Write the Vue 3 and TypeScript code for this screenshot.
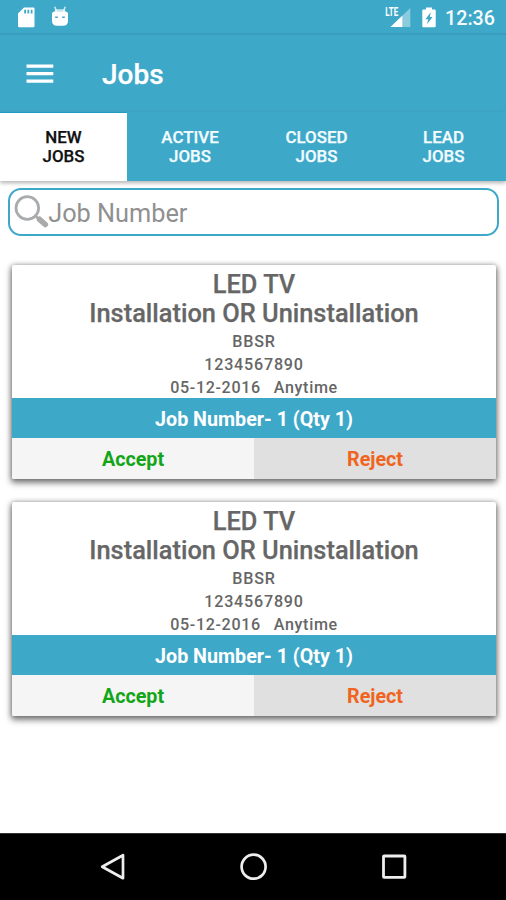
<script setup lang="ts">
interface Tab {
  top: string
  bottom: string
}

interface Job {
  id: number
  product: string
  service: string
  city: string
  phone: string
  date: string
  slot: string
  label: string
}

const tabs: Tab[] = [
  { top: 'NEW', bottom: 'JOBS' },
  { top: 'ACTIVE', bottom: 'JOBS' },
  { top: 'CLOSED', bottom: 'JOBS' },
  { top: 'LEAD', bottom: 'JOBS' },
]
const activeTab = 0

const base = {
  product: 'LED TV',
  service: 'Installation OR Uninstallation',
  city: 'BBSR',
  phone: '1234567890',
  date: '05-12-2016',
  slot: 'Anytime',
  label: 'Job Number- 1 (Qty 1)',
}
const jobs: Job[] = [
  { id: 1, ...base },
  { id: 2, ...base },
]
</script>

<template>
  <div class="screen">
    <header class="status">
      <svg class="sd" viewBox="0 0 17 21">
        <path fill="#fff" fill-rule="evenodd" d="M6 0.5H15.5Q16.5 0.5 16.5 1.5V19Q16.5 20.2 15.3 20.2H1.2Q0 20.2 0 19V6.5ZM6.2 2.8V6.5H8V2.8ZM9.4 2.8V6.5H11.2V2.8ZM12.7 2.8V6.5H14.5V2.8Z" />
      </svg>
      <svg class="droid" viewBox="0 0 18 21">
        <path d="M4 1.2L5.3 5M14 1.2L12.7 5" stroke="#fff" stroke-width="1.5" stroke-linecap="round" opacity="0.75" />
        <path fill="#fff" opacity="0.7" d="M4.8 3.2H13.2L15.5 6.5H2.5Z" />
        <path fill="#fff" d="M3 5.8H15Q17 5.8 17 7.8V14.5Q17 19.8 12 19.8H6Q1 19.8 1 14.5V7.8Q1 5.8 3 5.8Z" />
        <path d="M4.2 11.3H6.8M11.2 11.3H13.8" stroke="#3ea8c9" stroke-width="1.5" />
      </svg>
      <span class="gap"></span>
      <svg class="signal" viewBox="0 0 26 22">
        <path d="M25.3 1V20H5.5Z" fill="#fff" opacity="0.4" />
        <path d="M17.3 8.7V20H5.5Z" fill="#fff" />
        <path d="M0 0H14V9.8L11 11H0Z" fill="#3ea8c9" />
        <text class="lte" x="0.3" y="9.3" textLength="12.8" lengthAdjust="spacingAndGlyphs">LTE</text>
      </svg>
      <svg class="battery" viewBox="0 0 14 21">
        <path fill="#fff" fill-rule="evenodd" d="M4 0.5H10V2.5H12.7Q13.7 2.5 13.7 3.5V19.3Q13.7 20.3 12.7 20.3H1.3Q0.3 20.3 0.3 19.3V3.5Q0.3 2.5 1.3 2.5H4ZM8.8 5.3L3.4 12.3H6.2L5 17.2L10.6 10H7.8Z" />
      </svg>
      <span class="clock">12:36</span>
    </header>

    <div class="appbar">
      <svg class="menu" viewBox="0 0 28 20">
        <path d="M0.5 2.2H27.3M0.5 9.7H27.3M0.5 17.2H27.3" stroke="#fff" stroke-width="3.2" />
      </svg>
      <h1>Jobs</h1>
    </div>

    <nav class="tabs">
      <div v-for="(tab, i) in tabs" :key="tab.top" class="tab" :class="{ active: i === activeTab }">
        <span>{{ tab.top }}</span>
        <span>{{ tab.bottom }}</span>
      </div>
    </nav>

    <div class="search">
      <svg viewBox="0 0 36 36">
        <path d="M25.5 25.3L31.3 30.5" stroke="#aaa" stroke-width="5.6" stroke-linecap="round" />
        <circle cx="13.3" cy="14" r="11.3" fill="none" stroke="#a9acae" stroke-width="2.8" />
        <path d="M21.3 21.8L24 24.2" stroke="#aaa" stroke-width="2.5" />
      </svg>
      <span>Job Number</span>
    </div>

    <main class="list">
      <article v-for="job in jobs" :key="job.id" class="card">
        <div class="info">
          <h2>{{ job.product }}</h2>
          <h2>{{ job.service }}</h2>
          <p>{{ job.city }}</p>
          <p>{{ job.phone }}</p>
          <p class="when"><span>{{ job.date }}</span><span>{{ job.slot }}</span></p>
        </div>
        <div class="band">{{ job.label }}</div>
        <div class="actions">
          <div class="accept">Accept</div>
          <div class="reject">Reject</div>
        </div>
      </article>
    </main>

    <footer class="navbar">
      <svg viewBox="0 0 28 28"><path d="M24 2.2V25.2L3.2 13.7Z" fill="none" stroke="#eee" stroke-width="2.7" stroke-linejoin="round" /></svg>
      <svg viewBox="0 0 28 28"><circle cx="13.6" cy="13.7" r="12" fill="none" stroke="#eee" stroke-width="2.7" /></svg>
      <svg viewBox="0 0 28 28"><rect x="3.5" y="3" width="21.4" height="21.4" rx="0.6" fill="none" stroke="#eee" stroke-width="2.8" /></svg>
    </footer>
  </div>
</template>

<style>
body {
  margin: 0;
  background: #fff;
}
</style>

<style scoped>
.screen {
  width: 506px;
  height: 900px;
  display: flex;
  flex-direction: column;
  overflow: hidden;
  background: #fff;
  font-family: Roboto, "Liberation Sans", sans-serif;
}
.status {
  box-sizing: border-box;
  height: 33px;
  flex: none;
  display: flex;
  align-items: flex-start;
  padding: 7px 11px 0 17.5px;
  background: #3ea8c9;
}
.sd { width: 17px; height: 21px; }
.droid { width: 18px; height: 21px; margin: -1px 0 0 16px; }
.gap { flex: 1; }
.signal { width: 26px; height: 22px; margin-right: 11px; overflow: visible; }
.lte { font-size: 12.5px; font-weight: 700; fill: #fff; }
.battery { width: 14px; height: 21px; margin-right: 9.5px; }
.clock {
  font-size: 19.7px;
  line-height: 23px;
  font-weight: 500;
  color: #f4fbfd;
}
.appbar {
  box-sizing: border-box;
  height: 79px;
  flex: none;
  display: flex;
  align-items: center;
  padding: 2px 26px 0 26px;
  background: linear-gradient(#3797b8 0, #3ea8c9 3px);
}
.menu { width: 28px; height: 20px; }
h1 {
  margin: 3px 0 0 48px;
  font-size: 28px;
  line-height: 34px;
  font-weight: 500;
  color: #fff;
  -webkit-text-stroke: 0.25px currentColor;
}
.tabs {
  height: 68.5px;
  flex: none;
  display: grid;
  grid-template-columns: 127px 126px 127px 126px;
  background: #3ea8c9;
  box-shadow: 0 2px 4px rgba(0, 0, 0, 0.3);
}
.tab {
  box-sizing: border-box;
  display: flex;
  flex-direction: column;
  align-items: center;
  justify-content: center;
  border-top: 1px solid transparent;
  padding-top: 1px;
  font-size: 16.9px;
  line-height: 19px;
  font-weight: 500;
  color: #f2fcff;
  -webkit-text-stroke: 0.25px currentColor;
}
.tab.active {
  background: #fff;
  border-top-color: #1c9cc0;
  color: #111;
}
.tab:last-child { padding-left: 1px; }
.search {
  box-sizing: border-box;
  height: 48px;
  flex: none;
  display: flex;
  align-items: center;
  margin: 7.5px 7px 0 8px;
  padding-left: 4px;
  border: 2px solid #3ea8c9;
  border-radius: 13px;
  font-size: 25.3px;
  line-height: 30px;
  color: #909090;
}
.search svg { width: 36px; height: 36px; }
.search span { margin: 3px 0 0 -1.8px; }
.list {
  flex: 1;
  display: flex;
  flex-direction: column;
  gap: 23px;
  padding: 29px 10px 0 12px;
}
.card {
  height: 214px;
  flex: none;
  display: flex;
  flex-direction: column;
  border-radius: 2px;
  overflow: hidden;
  background: #fff;
  box-shadow: 0 3px 6px 1px rgba(0, 0, 0, 0.5), 0 0 5px rgba(0, 0, 0, 0.25);
}
.info {
  box-sizing: border-box;
  height: 133px;
  flex: none;
  padding-top: 4.5px;
  text-align: center;
  color: #666;
}
h2 {
  margin: 0;
  font-size: 25.4px;
  line-height: 29.6px;
  font-weight: 500;
  -webkit-text-stroke: 0.25px currentColor;
}
h2 + p { margin-top: 1px; }
p {
  margin: 0;
  font-size: 16.1px;
  line-height: 23px;
  font-weight: 500;
  letter-spacing: 0.8px;
}
.when { letter-spacing: 0.65px; }
.when span + span { margin-left: 13px; }
.band {
  height: 40.3px;
  flex: none;
  text-align: center;
  line-height: 43px;
  font-size: 19.7px;
  font-weight: 700;
  color: #fff;
  background: #3ea8c9;
}
.actions {
  flex: 1;
  display: grid;
  grid-template-columns: 1fr 1fr;
  text-align: center;
  font-size: 19.7px;
  line-height: 44.6px;
  font-weight: 700;
}
.accept, .reject { height: 41px; }
.accept { background: #f5f5f5; color: #13a518; }
.reject { background: #e0e0e0; color: #f0641e; }
.navbar {
  box-sizing: border-box;
  height: 67px;
  flex: none;
  display: flex;
  align-items: center;
  justify-content: center;
  gap: 112.5px;
  padding-left: 1px;
  border-top: 1px solid #333;
  background: #000;
}
.navbar svg { width: 28px; height: 28px; }
</style>
